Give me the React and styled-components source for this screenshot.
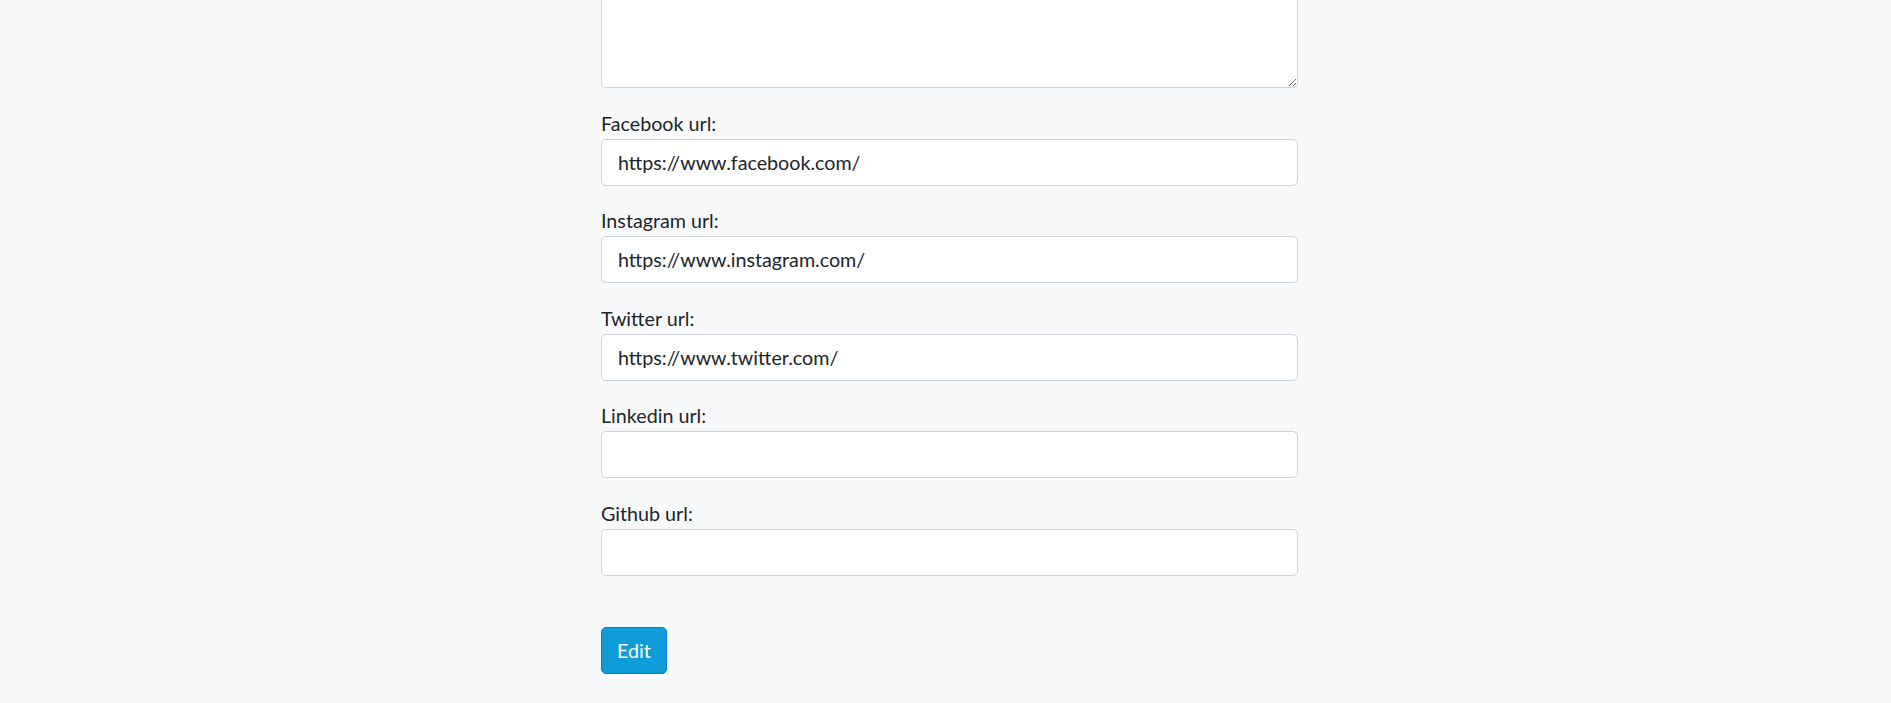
import React from 'react'
import styled, { createGlobalStyle } from 'styled-components'

const GlobalStyle = createGlobalStyle`
  html, body {
    margin: 0;
    padding: 0;
    background: #f8f9fa;
  }
  body {
    font-family: 'Lato', 'Open Sans', sans-serif;
    color: #212529;
  }
`

export default function App() {
  return (
    <>
      <GlobalStyle />
      <Page>
        <Form onSubmit={(e) => e.preventDefault()}>
          <Group>
            <TextArea defaultValue="" />
          </Group>
          <Field label="Facebook url:" value="https://www.facebook.com/" />
          <Field label="Instagram url:" value="https://www.instagram.com/" />
          <Field label="Twitter url:" value="https://www.twitter.com/" />
          <Field label="Linkedin url:" value="" />
          <Field label="Github url:" value="" />
          <SubmitButton type="submit">Edit</SubmitButton>
        </Form>
      </Page>
    </>
  )
}

function Field({ label, value }) {
  return (
    <Group>
      <Label>{label}</Label>
      <Input type="text" defaultValue={value} />
    </Group>
  )
}

const Page = styled.div`
  display: flex;
  justify-content: center;
  padding-left: 8px;
  min-height: 703px;
`

const Form = styled.form`
  width: 697px;
  display: flex;
  flex-direction: column;
`

const Group = styled.div`
  display: flex;
  flex-direction: column;
  margin-bottom: 20.5px;
`

const Label = styled.label`
  font-size: 19.7px;
  line-height: 30px;
  color: #212529;
`

const Input = styled.input`
  box-sizing: border-box;
  height: 47px;
  padding: 0 16px;
  font-family: inherit;
  font-size: 19.7px;
  color: #212529;
  background: #fff;
  border: 1px solid #ced4da;
  border-radius: 5px;
  outline: none;
`

const TextArea = styled.textarea`
  box-sizing: border-box;
  height: 88px;
  padding: 8px 16px;
  font-family: inherit;
  font-size: 19.7px;
  background: #fff;
  border: 1px solid #ced4da;
  border-top: none;
  border-radius: 0 0 5px 5px;
  outline: none;
`

const SubmitButton = styled.button`
  align-self: flex-start;
  margin-top: 30.5px;
  height: 47px;
  padding: 0 15px;
  font-family: inherit;
  font-size: 19.7px;
  color: #fff;
  background: #0e9dd9;
  border: 1px solid #0b6efd;
  border-radius: 5px;
  cursor: pointer;
`
